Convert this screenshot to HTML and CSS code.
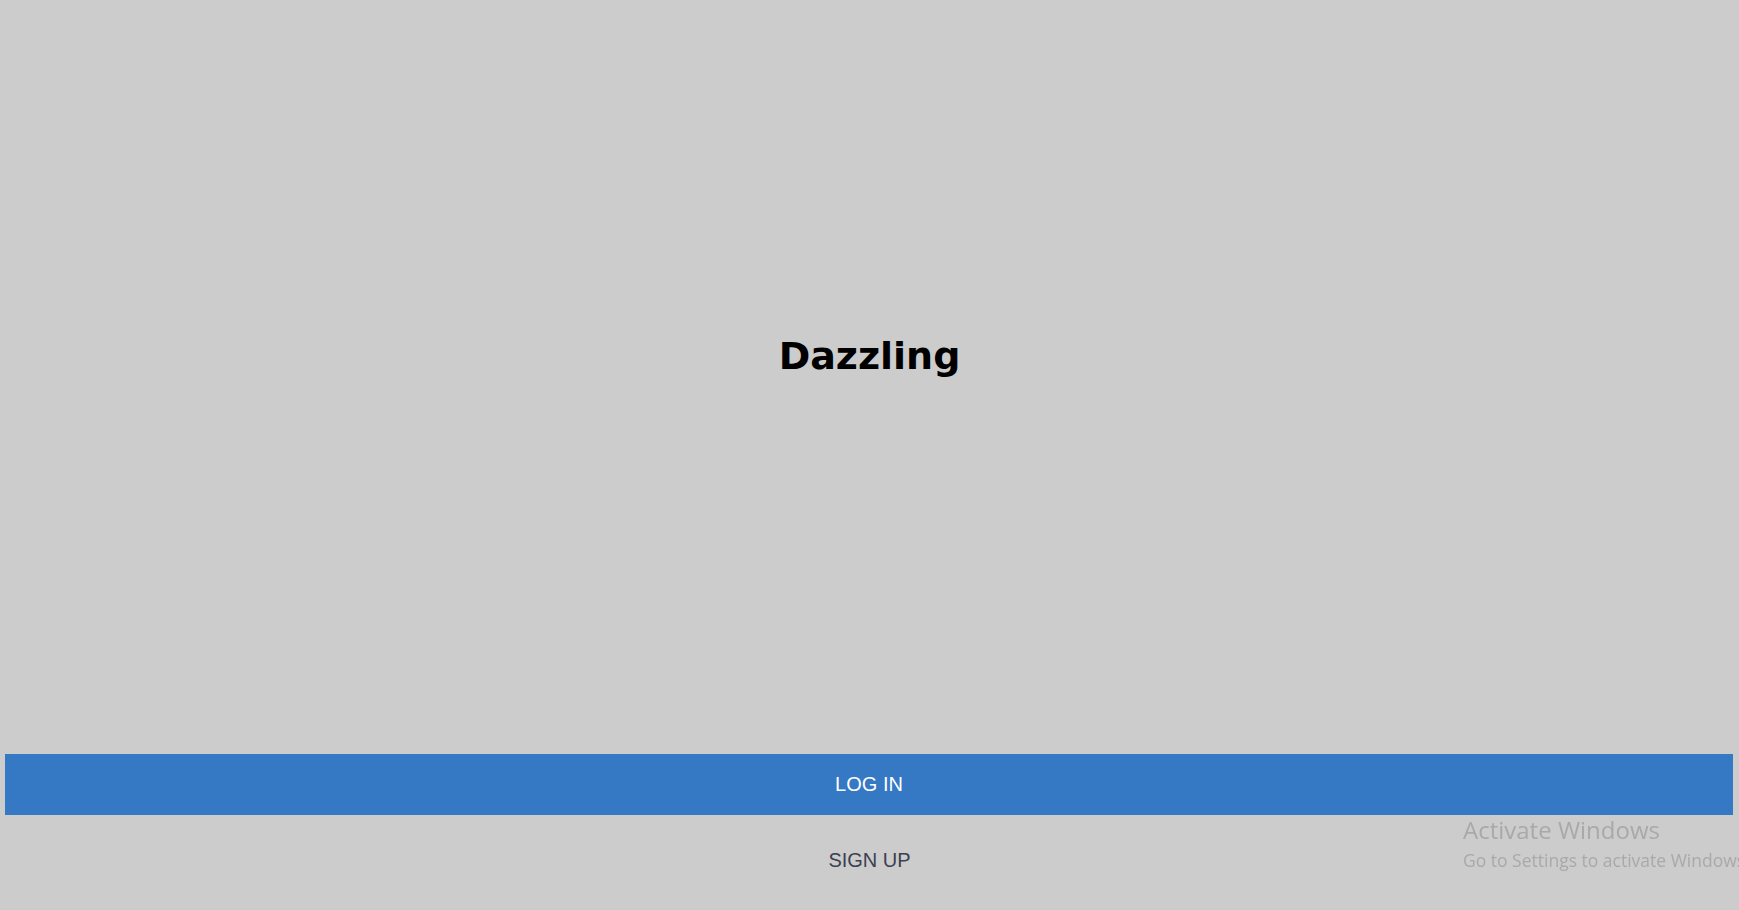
FILE: index.html
```html
<!DOCTYPE html>
<html lang="en">
<head>
<meta charset="utf-8">
<title>Dazzling</title>
<link rel="stylesheet" href="styles.css">
</head>
<body>
<div class="app">
  <main class="hero">
    <h1 class="title">Dazzling</h1>
  </main>
  <div class="actions">
    <button class="btn btn-login" type="button">LOG IN</button>
    <button class="btn btn-signup" type="button">SIGN UP</button>
  </div>
</div>
<div class="watermark">
  <div class="wm-title">Activate Windows</div>
  <div class="wm-sub">Go to Settings to activate Windows.</div>
</div>
</body>
</html>
```

FILE: styles.css
```css
html, body {
  margin: 0;
  padding: 0;
  height: 100%;
  overflow: hidden;
}
body {
  background: #cccccc;
  font-family: "Liberation Sans", Arial, sans-serif;
}
.app {
  height: 100vh;
  display: flex;
  flex-direction: column;
}
.hero {
  flex: 1;
  display: flex;
  align-items: center;
  justify-content: center;
  padding-bottom: 41px;
}
.title {
  margin: 0;
  font-family: "DejaVu Sans", sans-serif;
  font-weight: bold;
  font-size: 38px;
  color: #000;
  line-height: 1.2;
}
.actions {
  display: flex;
  flex-direction: column;
}
.btn {
  border: none;
  font-family: "Liberation Sans", Arial, sans-serif;
  font-size: 20px;
  cursor: pointer;
  padding: 0;
}
.btn-login {
  margin: 0 6px 0 5px;
  height: 61px;
  background: #3578c3;
  color: #ffffff;
}
.btn-signup {
  height: 95px;
  background: transparent;
  color: #3b4150;
  padding-bottom: 4px;
}
.watermark {
  position: fixed;
  left: 1463px;
  top: 814px;
  color: #a9a9a9;
  font-family: "Open Sans", "Noto Sans", sans-serif;
  white-space: nowrap;
  pointer-events: none;
}
.wm-title {
  font-size: 24px;
  line-height: 32px;
}
.wm-sub {
  font-size: 17.5px;
  line-height: 24px;
  margin-top: 2px;
}
```
